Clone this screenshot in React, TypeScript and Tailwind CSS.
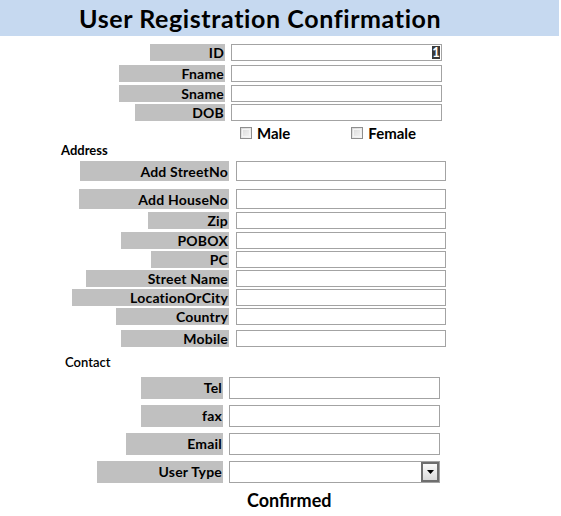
import React from "react";

type RowProps = {
  label: string;
  rowClass: string;
  labelClass: string;
  inputClass: string;
  top?: boolean;
  children?: React.ReactNode;
};

function Row({ label, rowClass, labelClass, inputClass, top, children }: RowProps) {
  return (
    <div className={`flex ${rowClass}`}>
      <div
        className={`${labelClass} bg-[#c0c0c0] flex justify-end ${top ? "items-start" : "items-center"} pr-[1px] text-[14px] leading-[17px] font-bold text-black whitespace-nowrap tracking-[0.2px]`}
      >
        {label}
      </div>
      <div className={`${inputClass} border border-[#a3a3a3] bg-white flex justify-end items-stretch`}>
        {children}
      </div>
    </div>
  );
}

function Check({ label, className }: { label: string; className: string }) {
  return (
    <div className={`flex items-center ${className}`}>
      <div className="w-[12px] h-[12px] border border-[#8e8e8e] bg-gradient-to-br from-[#d8d8d8] to-[#f7f7f7] p-[1px]">
        <div className="w-full h-full border border-[#f4f4f4]"></div>
      </div>
      <span className="ml-[5px] text-[15px] leading-[14px] font-bold text-black">{label}</span>
    </div>
  );
}

export default function App() {
  return (
    <div
      className="w-[561px] h-[516px] bg-white overflow-hidden flex flex-col"
      style={{ fontFamily: "Lato, 'Open Sans', sans-serif" }}
    >
      <div className="w-[559px] h-[36px] bg-[#c6d9f0] pl-[79px] text-[25px] leading-[36px] font-bold tracking-[0.6px] text-black whitespace-nowrap">
        User Registration Confirmation
      </div>

      <Row label="ID" rowClass="mt-[8px] h-[17px]" labelClass="ml-[150px] w-[75px]" inputClass="ml-[6px] w-[211px]">
        <div className="my-[1px] mr-[1px] w-[8px] bg-[#3a3a3a] text-white text-[13px] leading-[13px] font-bold flex items-center justify-center">
          1
        </div>
      </Row>
      <Row label="Fname" rowClass="mt-[4px] h-[17px]" labelClass="ml-[119px] w-[106px]" inputClass="ml-[6px] w-[211px]" />
      <Row label="Sname" rowClass="mt-[3px] h-[17px]" labelClass="ml-[119px] w-[106px]" inputClass="ml-[6px] w-[211px]" />
      <Row label="DOB" rowClass="mt-[2px] h-[17px]" labelClass="ml-[135px] w-[90px]" inputClass="ml-[6px] w-[211px]" />

      <div className="mt-[5px] h-[13px] flex">
        <Check label="Male" className="ml-[240px]" />
        <Check label="Female" className="ml-[61px]" />
      </div>

      <div className="mt-[3px] h-[16px] pl-[61px] text-[13px] leading-[16px] font-bold text-black">Address</div>

      <Row label="Add StreetNo" rowClass="mt-[3px] h-[20px]" labelClass="ml-[80px] w-[149px]" inputClass="ml-[7px] w-[210px]" />
      <Row label="Add HouseNo" rowClass="mt-[8px] h-[20px]" labelClass="ml-[79px] w-[150px]" inputClass="ml-[7px] w-[210px]" />
      <Row label="Zip" rowClass="mt-[3px] h-[17px]" labelClass="ml-[148px] w-[81px]" inputClass="ml-[7px] w-[210px]" />
      <Row label="POBOX" rowClass="mt-[3px] h-[17px]" labelClass="ml-[121px] w-[108px]" inputClass="ml-[7px] w-[210px]" />
      <Row label="PC" rowClass="mt-[2px] h-[17px]" labelClass="ml-[151px] w-[78px]" inputClass="ml-[7px] w-[210px]" />
      <Row label="Street Name" rowClass="mt-[2px] h-[17px]" labelClass="ml-[86px] w-[143px]" inputClass="ml-[7px] w-[210px]" />
      <Row label="LocationOrCity" rowClass="mt-[2px] h-[17px]" labelClass="ml-[72px] w-[157px]" inputClass="ml-[7px] w-[210px]" />
      <Row label="Country" rowClass="mt-[2px] h-[17px]" labelClass="ml-[116px] w-[113px]" inputClass="ml-[7px] w-[210px]" />
      <Row label="Mobile" rowClass="mt-[5px] h-[17px]" labelClass="ml-[121px] w-[108px]" inputClass="ml-[7px] w-[210px]" />

      <div className="mt-[7px] h-[16px] pl-[65px] text-[13px] leading-[16px] font-semibold text-black">Contact</div>

      <Row label="Tel" top rowClass="mt-[7px] h-[22px]" labelClass="ml-[141px] w-[82px] pt-[2px]" inputClass="ml-[6px] w-[211px]" />
      <Row label="fax" top rowClass="mt-[6px] h-[22px]" labelClass="ml-[141px] w-[82px] pt-[2px]" inputClass="ml-[6px] w-[211px]" />
      <Row label="Email" top rowClass="mt-[6px] h-[22px]" labelClass="ml-[126px] w-[97px] pt-[2px]" inputClass="ml-[6px] w-[211px]" />
      <Row label="User Type" top rowClass="mt-[6px] h-[22px]" labelClass="ml-[97px] w-[126px] pt-[2px]" inputClass="ml-[6px] w-[211px]">
        <div className="w-[18px] border-2 border-[#6e6e6e] bg-gradient-to-b from-[#fbfbfb] to-[#dadada] flex items-center justify-center">
          <svg width="7" height="4" viewBox="0 0 7 4">
            <polygon points="0,0 7,0 3.5,4" fill="#000" />
          </svg>
        </div>
      </Row>

      <div className="mt-[6px] h-[22px] pl-[247px] text-[18px] leading-[22px] font-bold text-black">Confirmed</div>
    </div>
  );
}
